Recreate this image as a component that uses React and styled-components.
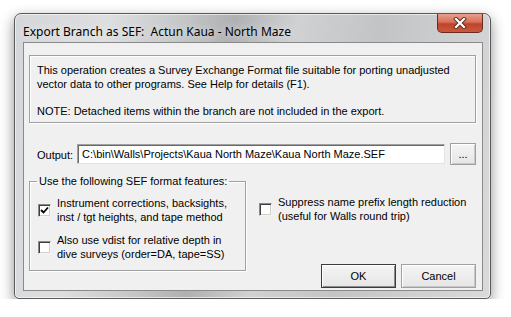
import styled, { createGlobalStyle } from "styled-components";

const Global = createGlobalStyle`
	body {
		margin: 0;
		background: #ffffff;
		font-family: "Liberation Sans", Arial, sans-serif;
	}
`;

const Window = styled.div`
	margin: 13px 0 0 14px;
	width: 477px;
	height: 286px;
	box-sizing: border-box;
	padding: 0 7px 7px 8px;
	border: 1px solid #5a5a5a;
	border-radius: 7px 7px 5px 5px;
	background: linear-gradient(
		100deg,
		#d4d6d9 0%,
		#dcdee0 18%,
		#c4c6c8 32%,
		#aeb0b2 42%,
		#cfd1d3 54%,
		#c2c4c6 70%,
		#d8dadc 100%
	);
	box-shadow: 0 5px 14px rgba(0, 0, 0, 0.45), inset 0 0 0 1px rgba(255, 255, 255, 0.6);
	display: flex;
	flex-direction: column;
`;

const TitleBar = styled.div`
	height: 28px;
	display: flex;
	align-items: flex-start;
	justify-content: space-between;
`;

const Title = styled.div`
	font-family: "Noto Sans", "Open Sans", sans-serif;
	font-size: 12px;
	color: #000;
	margin-top: 9px;
	white-space: pre;
	text-shadow: 0 0 8px rgba(255, 255, 255, 0.9);
`;

const CloseButton = styled.div`
	width: 46px;
	height: 19px;
	box-sizing: border-box;
	border: 1px solid #6b2a20;
	border-top: none;
	border-radius: 0 0 5px 5px;
	background: linear-gradient(#e8a08f 0%, #d6705a 45%, #c0432b 55%, #c95a3e 100%);
	display: flex;
	align-items: center;
	justify-content: center;
`;

const Client = styled.div`
	flex: 1;
	background: #f0f0f0;
	border: 1px solid #8a8a8a;
	box-sizing: border-box;
	padding: 12px 6px 0 5px;
	display: flex;
	flex-direction: column;
	font-size: 11px;
	color: #000;
`;

const InfoBox = styled.div`
	height: 68px;
	box-sizing: border-box;
	border: 1px solid #a0a0a0;
	box-shadow: 1px 1px 0 #fff, inset 1px 1px 0 #fff;
	padding: 7px 0 0 7px;
	line-height: 14px;
`;

const Para = styled.p`
	margin: 0 0 ${(p) => p.$gap || 0}px;
`;

const OutputRow = styled.div`
	display: flex;
	align-items: center;
	margin-top: 20px;
	padding-left: 8px;
`;

const Label = styled.span`
	margin-right: 4px;
	margin-top: 2px;
`;

const Edit = styled.div`
	width: 370px;
	height: 20px;
	box-sizing: border-box;
	background: #fff;
	border: 1px solid;
	border-color: #a0a0a0 #e3e3e3 #e3e3e3 #a0a0a0;
	box-shadow: inset 1px 1px 0 #696969;
	padding: 3px 0 0 4px;
	white-space: nowrap;
`;

const Button = styled.div`
	width: ${(p) => p.$w}px;
	height: ${(p) => p.$h}px;
	box-sizing: border-box;
	border: 1px solid ${(p) => (p.$default ? "#3c3c3c" : "#a0a0a0")};
	box-shadow: inset 1px 1px 0 #fff, inset -1px -1px 0 ${(p) => (p.$default ? "#8a8a8a" : "#c8c8c8")};
	background: linear-gradient(#f4f4f4, #e6e6e6);
	display: flex;
	align-items: center;
	justify-content: center;
	font-size: 11px;
	margin-left: ${(p) => p.$ml || 0}px;
`;

const Bottom = styled.div`
	display: flex;
	margin-top: 10px;
`;

const Group = styled.fieldset`
	margin: 0;
	width: 217px;
	height: 96px;
	box-sizing: border-box;
	padding: 9px 0 0 8px;
	border: 1px solid #a0a0a0;
	box-shadow: 1px 1px 0 #fff, inset 1px 1px 0 #fff;
	display: flex;
	flex-direction: column;
	gap: 9px;
`;

const Legend = styled.legend`
	padding: 0 2px;
	margin-left: -1px;
	font-size: 11px;
	font-family: "Liberation Sans", Arial, sans-serif;
`;

const CheckRow = styled.div`
	display: flex;
	align-items: center;
	line-height: 14px;
`;

const Box = styled.div`
	width: 13px;
	height: 13px;
	box-sizing: border-box;
	background: #fff;
	border: 1px solid;
	border-color: #8a8a8a #f4f4f4 #f4f4f4 #8a8a8a;
	box-shadow: inset 1px 1px 0 #404040, inset -1px -1px 0 #d4d0c8;
	margin-right: 6px;
	flex-shrink: 0;
	display: flex;
	align-items: center;
	justify-content: center;
`;

const RightCol = styled.div`
	flex: 1;
	display: flex;
	flex-direction: column;
	padding: 20px 0 0 13px;
`;

const ButtonRow = styled.div`
	display: flex;
	justify-content: flex-end;
	margin-top: 41px;
`;

function Check({ checked, children }) {
	return (
		<CheckRow>
			<Box>
				{checked && (
					<svg width="9" height="9" viewBox="0 0 9 9">
						<path d="M1 4 L3.5 6.5 L8 1.5" stroke="#000" strokeWidth="1.8" fill="none" />
					</svg>
				)}
			</Box>
			<div>{children}</div>
		</CheckRow>
	);
}

export default function App() {
	return (
		<>
			<Global />
			<Window>
				<TitleBar>
					<Title>{"Export Branch as SEF:  Actun Kaua - North Maze"}</Title>
					<CloseButton>
						<svg width="14" height="12" viewBox="0 0 14 12">
							<path d="M3 2 L11 10 M11 2 L3 10" stroke="#5a2a20" strokeWidth="4" strokeLinecap="square" />
							<path d="M3 2 L11 10 M11 2 L3 10" stroke="#fff" strokeWidth="2.2" strokeLinecap="square" />
						</svg>
					</CloseButton>
				</TitleBar>
				<Client>
					<InfoBox>
						<Para>This operation creates a Survey Exchange Format file suitable for porting unadjusted</Para>
						<Para $gap={13}>vector data to other programs. See Help for details (F1).</Para>
						<Para>NOTE: Detached items within the branch are not included in the export.</Para>
					</InfoBox>
					<OutputRow>
						<Label>Output:</Label>
						<Edit>C:\bin\Walls\Projects\Kaua North Maze\Kaua North Maze.SEF</Edit>
						<Button $w={26} $h={22} $ml={5}>...</Button>
					</OutputRow>
					<Bottom>
						<Group>
							<Legend>Use the following SEF format features:</Legend>
							<Check checked>
								Instrument corrections, backsights,
								<br />
								inst / tgt heights, and tape method
							</Check>
							<Check>
								Also use vdist for relative depth in
								<br />
								dive surveys (order=DA, tape=SS)
							</Check>
						</Group>
						<RightCol>
							<Check>
								Suppress name prefix length reduction
								<br />
								(useful for Walls round trip)
							</Check>
							<ButtonRow>
								<Button $w={75} $h={24} $default>OK</Button>
								<Button $w={75} $h={24} $ml={5}>Cancel</Button>
							</ButtonRow>
						</RightCol>
					</Bottom>
				</Client>
			</Window>
		</>
	);
}
